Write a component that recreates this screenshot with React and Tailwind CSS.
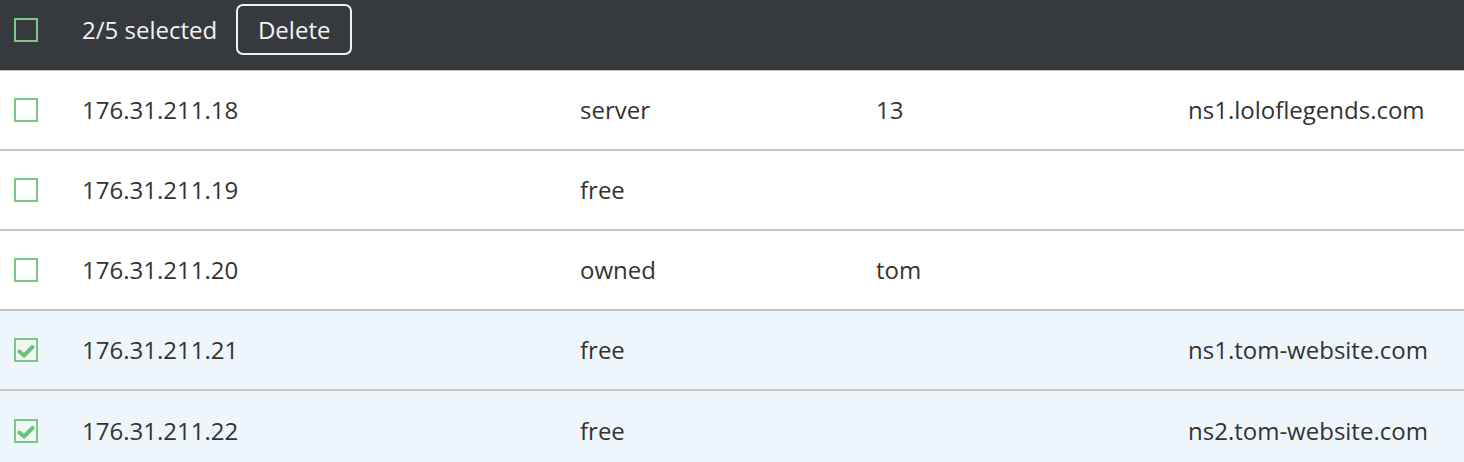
import { useState } from "react";

const initialRows = [
  { ip: "176.31.211.18", status: "server", owner: "13", ns: "ns1.loloflegends.com", selected: false },
  { ip: "176.31.211.19", status: "free", owner: "", ns: "", selected: false },
  { ip: "176.31.211.20", status: "owned", owner: "tom", ns: "", selected: false },
  { ip: "176.31.211.21", status: "free", owner: "", ns: "ns1.tom-website.com", selected: true },
  { ip: "176.31.211.22", status: "free", owner: "", ns: "ns2.tom-website.com", selected: true },
];

function Checkbox({ checked, onChange, dark }) {
  return (
    <button
      onClick={onChange}
      className={
        "w-[24px] h-[24px] border-2 border-[#7cc68b] flex items-center justify-center " +
        (dark ? "bg-[#363a3f]" : checked ? "bg-[#eef7f0]" : "bg-white")
      }
    >
      {checked && (
        <svg width="18" height="15" viewBox="0 0 18 15" className="mt-[2px]">
          <path
            d="M2.5 7.5 L7 11.5 L15.5 3"
            fill="none"
            stroke="#6cbf7d"
            strokeWidth="4"
            strokeLinecap="round"
            strokeLinejoin="round"
          />
        </svg>
      )}
    </button>
  );
}

export default function App() {
  const [rows, setRows] = useState(initialRows);
  const count = rows.filter((r) => r.selected).length;

  function toggle(i) {
    setRows(rows.map((r, j) => (j === i ? { ...r, selected: !r.selected } : r)));
  }

  return (
    <div
      className="w-[1464px] h-[462px] overflow-hidden bg-white text-[24px] text-[#333]"
      style={{ fontFamily: '"Open Sans", "Noto Sans", sans-serif' }}
    >
      <div className="h-[71px] bg-[#363a3f] border-b border-[#c4c4c4] flex items-start pt-[4px]">
        <div className="w-[82px] h-[51px] pl-[14px] flex items-center">
          <Checkbox checked={false} dark onChange={() => {}} />
        </div>
        <span className="h-[51px] flex items-center text-[#f2f2f2]">
          {count}/{rows.length} selected
        </span>
        <button className="ml-[19px] w-[116px] h-[51px] border-2 border-[#f0f0f0] rounded-[7px] text-[#f2f2f2]">
          Delete
        </button>
      </div>
      {rows.map((r, i) => (
        <div
          key={r.ip}
          className={
            "h-[80px] grid grid-cols-[82px_498px_296px_312px_1fr] items-center " +
            (i < rows.length - 1 ? "border-b-2 border-[#c4c4c4] " : "") +
            (r.selected ? "bg-[#eef6fc]" : "bg-white")
          }
        >
          <div className="pl-[14px] flex items-center">
            <Checkbox checked={r.selected} onChange={() => toggle(i)} />
          </div>
          <div>{r.ip}</div>
          <div>{r.status}</div>
          <div>{r.owner}</div>
          <div>{r.ns}</div>
        </div>
      ))}
    </div>
  );
}
